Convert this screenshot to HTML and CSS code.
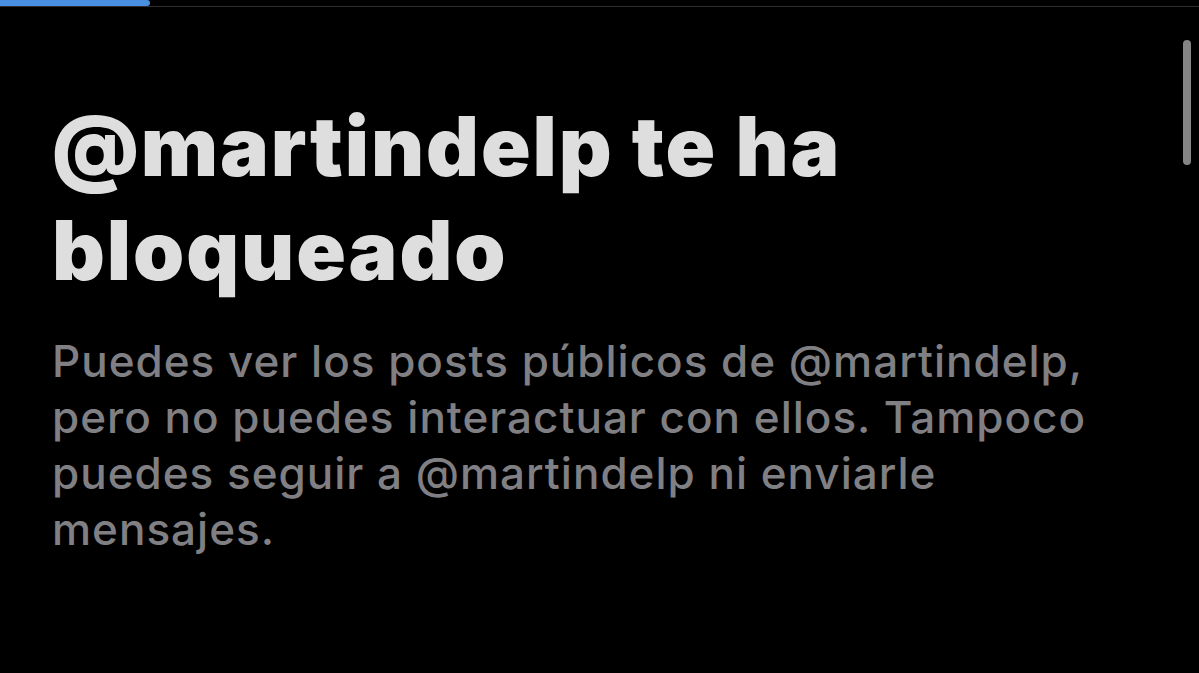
FILE: index.html
```html
<!DOCTYPE html>
<html lang="es">
<head>
  <meta charset="UTF-8" />
  <meta name="viewport" content="width=device-width, initial-scale=1.0"/>
  <title>Bloqueado</title>
  <link rel="stylesheet" href="styles.css">
</head>
<body>

  <div class="topbar">
    <div class="progress"></div>
  </div>

  <div class="scroll-thumb"></div>

  <div class="blocked">
    <h1>@martindelp te ha bloqueado</h1>
    <p>Puedes ver los posts públicos de @martindelp, pero no puedes interactuar con ellos. Tampoco puedes seguir a @martindelp ni enviarle mensajes.</p>
  </div>

</body>
</html>
```

FILE: styles.css
```css
body {
  font-family: Inter, "Noto Sans", sans-serif;
  background: #000;
  margin: 0;
  height: 100vh;
  overflow: hidden;
}

.topbar {
  height: 6px;
  border-bottom: 1px solid #2e2e30;
}

.progress {
  width: 150px;
  height: 6px;
  background-color: #4a90e2;
  border-radius: 0 3px 3px 0;
}

/* overlay scrollbar */
.scroll-thumb {
  position: absolute;
  top: 40px;
  right: 8px;
  width: 8px;
  height: 125px;
  border-radius: 4px;
  background: #858585;
}

.blocked {
  padding: 88px 0 0 52px;
  width: 1050px;
}

.blocked h1 {
  margin: 0;
  font-size: 82px;
  line-height: 104px;
  font-weight: 900;
  letter-spacing: 1.9px;
  color: #dedede;
}

.blocked p {
  margin: 30px 0 0;
  font-size: 44px;
  line-height: 56px;
  font-weight: 500;
  letter-spacing: 1px;
  color: #808084;
}
```
